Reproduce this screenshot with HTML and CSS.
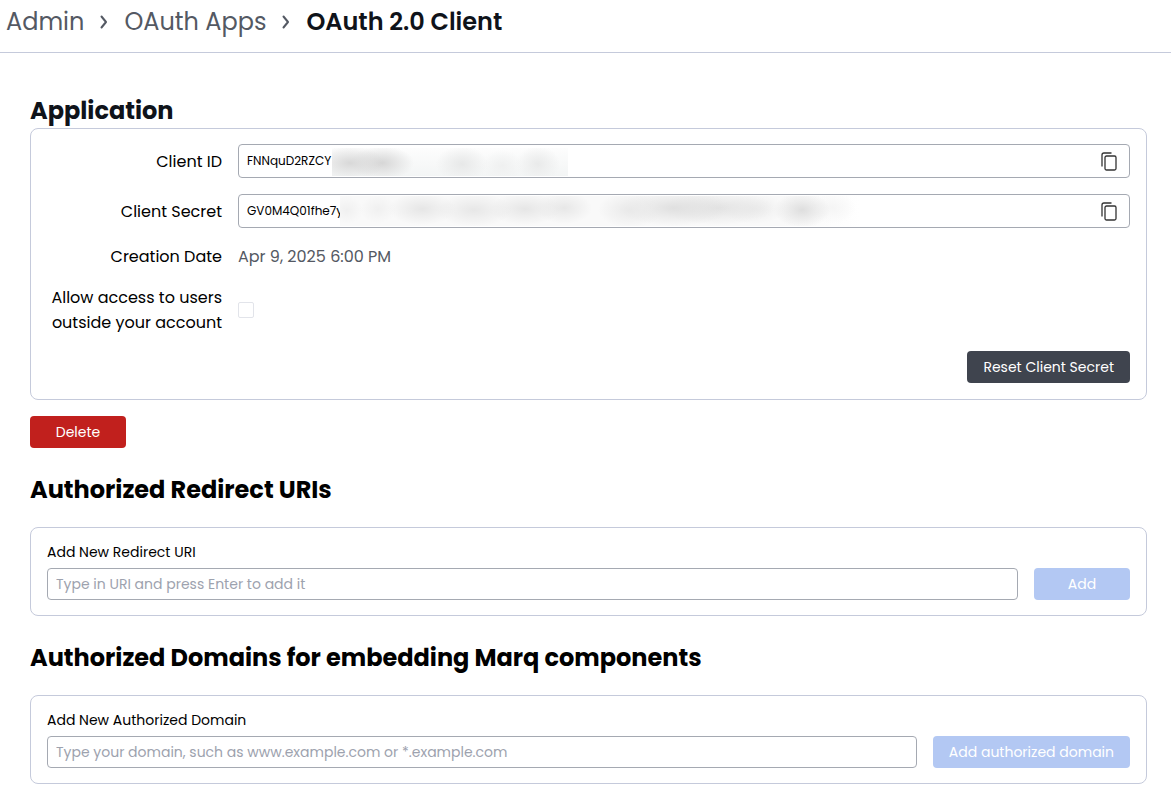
FILE: index.html
```html
<!doctype html>
<html lang="en">
<head>
  <meta charset="utf-8">
  <title>OAuth 2.0 Client</title>
  <link rel="stylesheet" href="styles.css">
</head>
<body>
  <nav class="breadcrumbs" aria-label="Breadcrumb">
    <a href="#">Admin</a>
    <svg class="chevron" viewBox="0 0 8 14" aria-hidden="true"><path d="M1.5 1.5 L6 7 L1.5 12.5"/></svg>
    <a href="#">OAuth Apps</a>
    <svg class="chevron" viewBox="0 0 8 14" aria-hidden="true"><path d="M1.5 1.5 L6 7 L1.5 12.5"/></svg>
    <span class="current">OAuth 2.0 Client</span>
  </nav>

  <main>
    <h2 class="application-title">Application</h2>
    <section class="card application">
      <label for="client-id">Client ID</label>
      <div class="copy-field">
        <input id="client-id" type="text" value="FNNquD2RZCY" readonly>
        <span class="redacted redacted-id"></span>
        <button class="copy" type="button" aria-label="Copy client ID">
          <svg viewBox="0 0 16 19"><path d="M1 14.500V3a2 2 0 0 1 2-2H10.500"/><rect x="4" y="4" width="11" height="14" rx="1.500"/></svg>
        </button>
      </div>

      <label for="client-secret">Client Secret</label>
      <div class="copy-field">
        <input id="client-secret" type="text" value="GV0M4Q01fhe7y" readonly>
        <span class="redacted redacted-secret"></span>
        <button class="copy" type="button" aria-label="Copy client secret">
          <svg viewBox="0 0 16 19"><path d="M1 14.500V3a2 2 0 0 1 2-2H10.500"/><rect x="4" y="4" width="11" height="14" rx="1.500"/></svg>
        </button>
      </div>

      <span class="name">Creation Date</span>
      <span class="date">Apr 9, 2025 6:00 PM</span>

      <label for="outside">Allow access to users outside your account</label>
      <input id="outside" class="checkbox" type="checkbox">

      <button class="btn btn-dark" type="button">Reset Client Secret</button>
    </section>
    <button class="btn btn-delete" type="button">Delete</button>

    <h2>Authorized Redirect URIs</h2>
    <section class="card add-card">
      <label for="redirect-uri">Add New Redirect URI</label>
      <div class="add-row">
        <input id="redirect-uri" type="text" placeholder="Type in URI and press Enter to add it">
        <button class="btn btn-add" type="button" disabled>Add</button>
      </div>
    </section>

    <h2>Authorized Domains for embedding Marq components</h2>
    <section class="card add-card">
      <label for="domain">Add New Authorized Domain</label>
      <div class="add-row">
        <input id="domain" type="text" placeholder="Type your domain, such as www.example.com or *.example.com">
        <button class="btn btn-add" type="button" disabled>Add authorized domain</button>
      </div>
    </section>
  </main>
</body>
</html>
```
FILE: styles.css
```css
* {
  box-sizing: border-box;
}

body {
  margin: 0;
  background: #fff;
  color: #000;
  font-family: Poppins, Inter, sans-serif;
  font-size: 16px;
}

input, button {
  font-family: inherit;
}

.breadcrumbs {
  display: flex;
  align-items: center;
  gap: 16px;
  padding: 4px 6px 12px;
  border-bottom: 1px solid #c5cadb;
  font-size: 24px;
  line-height: 36px;
}
.breadcrumbs a {
  color: #545963;
  text-decoration: none;
}
.breadcrumbs .current {
  color: #0f131a;
  font-weight: 600;
}

.chevron {
  width: 8px;
  height: 14px;
  fill: none;
  stroke: #545963;
  stroke-width: 2;
  stroke-linecap: round;
  stroke-linejoin: round;
}

main {
  padding: 41px 24px 16px 30px;
}

h2 {
  margin: 24px 0 19px;
  font-size: 24px;
  font-weight: 700;
  line-height: 36px;
}
.application-title {
  margin: 0;
  color: #0f131a;
  line-height: 34px;
}

.card {
  padding: 16px;
  border: 1px solid #c5cadb;
  border-radius: 8px;
}

/* Application */
.application {
  display: grid;
  grid-template-columns: 175px 1fr;
  gap: 16px;
  align-items: center;
  margin-bottom: 16px;
  padding-top: 15px;
  line-height: 25px;
}
.application label, .application .name {
  text-align: right;
}
.application .date {
  color: #545963;
}

.copy-field {
  position: relative;
  display: flex;
  align-items: center;
  height: 34px;
  padding: 0 12px 0 8px;
  border: 1px solid #a5a9b2;
  border-radius: 4px;
}
.copy-field input {
  flex: 1;
  min-width: 0;
  padding: 0;
  border: 0;
  outline: 0;
  background: none;
  color: #000;
  font-size: 12px;
}

.copy {
  display: flex;
  padding: 0;
  border: 0;
  background: none;
  cursor: pointer;
}
.copy svg {
  width: 16px;
  height: 19px;
  fill: none;
  stroke: #333;
  stroke-width: 1.3;
}

/* Smudges over the hidden part of the credentials */
.redacted {
  position: absolute;
  top: 3px;
  height: 28px;
}
.redacted-id {
  left: 93px;
  width: 236px;
  background:
    radial-gradient(ellipse 34px 17px at 18px 15px, #d8d8d8, transparent),
    radial-gradient(ellipse 32px 17px at 50px 15px, #d6d6d6, transparent),
    radial-gradient(ellipse 26px 18px at 130px 16px, #e7e8e8, transparent),
    radial-gradient(ellipse 20px 16px at 170px 18px, #eff0f0, transparent),
    radial-gradient(ellipse 22px 18px at 206px 16px, #e9eaea, transparent),
    linear-gradient(#fdfdfd, #f3f5f5);
}
.redacted-secret {
  top: 1px;
  left: 101px;
  width: 520px;
  height: 30px;
  background:
    radial-gradient(ellipse 16px 14px at 7px 14px, #f0f0f0, transparent),
    radial-gradient(ellipse 18px 14px at 38px 13px, #f0f0f0, transparent),
    radial-gradient(ellipse 34px 16px at 82px 13px, #e6e6e6, transparent),
    radial-gradient(ellipse 38px 17px at 134px 14px, #e7e7e7, transparent),
    radial-gradient(ellipse 36px 16px at 185px 13px, #e6e6e6, transparent),
    radial-gradient(ellipse 28px 16px at 224px 12px, #e7e7e7, transparent),
    radial-gradient(ellipse 32px 18px at 290px 14px, #e9e9e9, transparent),
    radial-gradient(ellipse 56px 18px at 334px 12px, #e0e0e0, transparent),
    radial-gradient(ellipse 56px 17px at 378px 12px, #e3e3e3, transparent),
    radial-gradient(ellipse 32px 15px at 414px 13px, #ececec, transparent),
    radial-gradient(ellipse 28px 18px at 462px 14px, #dedede, transparent),
    radial-gradient(ellipse 24px 16px at 492px 12px, #f5f5f5, transparent),
    linear-gradient(90deg, #f9f9f9, #f9f9f9 85%, #fff);
}

.checkbox {
  appearance: none;
  width: 16px;
  height: 16px;
  margin: 0;
  border: 1px solid #e2e4ea;
  border-radius: 2px;
  background: #fff;
}
.checkbox:checked {
  background: #3f444e;
}

/* Buttons */
.btn {
  min-width: 96px;
  height: 32px;
  padding: 0 16px;
  border: 0;
  border-radius: 4px;
  color: #fff;
  font-size: 14px;
  font-weight: 400;
  cursor: pointer;
}
.btn-dark {
  grid-column: 2;
  justify-self: end;
  background: #3f444e;
}
.btn-delete {
  display: block;
  background: #c1201d;
}
.btn-add {
  background: #b3c8f3;
  cursor: default;
}

/* Redirect URIs and domains */
.add-card {
  padding-bottom: 15px;
}
.add-card label {
  display: block;
  margin-bottom: 8px;
  font-size: 14px;
  line-height: 16px;
}
.add-row {
  display: flex;
  gap: 16px;
}
.add-row input {
  flex: 1;
  min-width: 0;
  height: 32px;
  padding: 0 8px;
  border: 1px solid #a5a9b2;
  border-radius: 4px;
  font-size: 14px;
}
.add-row input::placeholder {
  color: #9da2ae;
}
```
